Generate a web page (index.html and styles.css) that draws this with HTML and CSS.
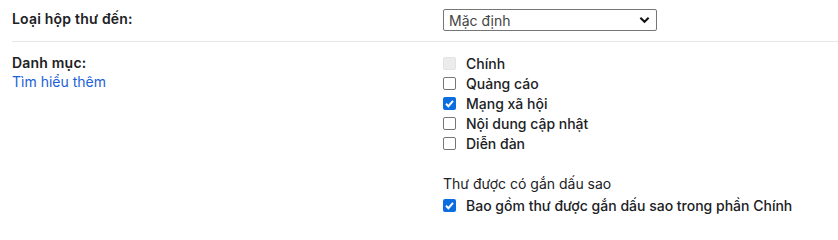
FILE: index.html
```html
<!DOCTYPE html>
<html lang="vi">
<head>
<meta charset="utf-8">
<link rel="stylesheet" href="styles.css">
</head>
<body>
<div class="settings">
  <div class="row first">
    <div class="label"><span class="title">Loại hộp thư đến:</span></div>
    <div class="control">
      <div class="select">
        <span>Mặc định</span>
        <svg class="chev" viewBox="0 0 12 8" width="11" height="8"><path d="M1.5 1.5 L6 6 L10.5 1.5" fill="none" stroke="#111" stroke-width="2.2"/></svg>
      </div>
    </div>
  </div>
  <div class="row second">
    <div class="label">
      <div class="title">Danh mục:</div>
      <a class="link" href="#">Tìm hiểu thêm</a>
    </div>
    <div class="control">
      <div class="opt"><span class="cb disabled"></span><span>Chính</span></div>
      <div class="opt"><span class="cb"></span><span>Quảng cáo</span></div>
      <div class="opt"><span class="cb checked"><svg viewBox="0 0 13 13" width="13" height="13"><path d="M3 6.8 L5.4 9.2 L10 3.8" fill="none" stroke="#fff" stroke-width="2"/></svg></span><span>Mạng xã hội</span></div>
      <div class="opt"><span class="cb"></span><span>Nội dung cập nhật</span></div>
      <div class="opt"><span class="cb"></span><span>Diễn đàn</span></div>
      <div class="subhead">Thư được có gắn dấu sao</div>
      <div class="opt"><span class="cb checked"><svg viewBox="0 0 13 13" width="13" height="13"><path d="M3 6.8 L5.4 9.2 L10 3.8" fill="none" stroke="#fff" stroke-width="2"/></svg></span><span>Bao gồm thư được gắn dấu sao trong phần Chính</span></div>
    </div>
  </div>
</div>
</body>
</html>
```
FILE: styles.css
```css
html, body {
  margin: 0;
  padding: 0;
  background: #fff;
}
body {
  font-family: Inter, Roboto, "Noto Sans", sans-serif;
  font-size: 14px;
  color: #202124;
}
.settings {
  padding-left: 12px;
}
.row {
  display: flex;
}
.row.first {
  height: 42px;
  border-bottom: 1px solid #e6e6e6;
  align-items: flex-start;
  padding-top: 9px;
  box-sizing: border-box;
}
.row.first .label {
  padding-top: 1px;
}
.label {
  width: 431px;
  flex: none;
}
.title {
  font-weight: 600;
  letter-spacing: 0.2px;
}
.select {
  width: 214px;
  height: 22px;
  box-sizing: border-box;
  border: 1px solid #767676;
  border-radius: 2px;
  display: flex;
  align-items: center;
  justify-content: space-between;
  padding: 0 5px 0 5px;
  color: #444;
}
.chev {
  margin-right: 1px;
}
.row.second {
  padding-top: 11px;
}
.second .title {
  line-height: 20px;
}
.link {
  color: #1a62d6;
  text-decoration: none;
  line-height: 18px;
  display: block;
}
.control {
  display: flex;
  flex-direction: column;
}
.opt {
  display: flex;
  align-items: center;
  height: 20px;
  gap: 10px;
  font-weight: 500;
}
.cb {
  width: 13px;
  height: 13px;
  box-sizing: border-box;
  border: 1px solid #767676;
  border-radius: 2px;
  flex: none;
  display: flex;
}
.cb.disabled {
  border-color: #e3e3e3;
  background: #ececec;
}
.cb.checked {
  border: none;
  background: #0b6ee0;
}
.subhead {
  margin-top: 20px;
  height: 22px;
  line-height: 22px;
}
```
